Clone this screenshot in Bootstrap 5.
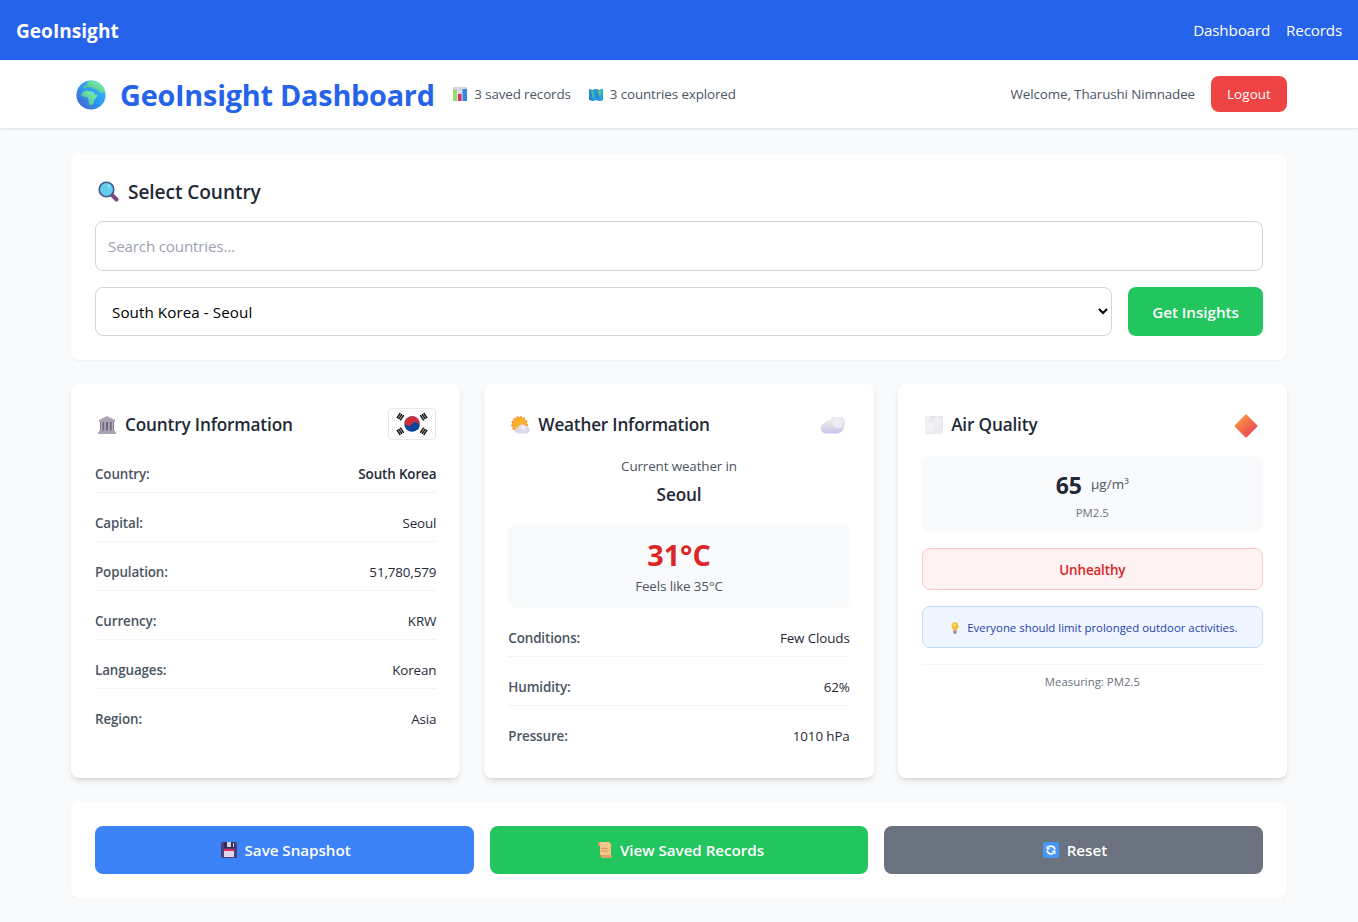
<!DOCTYPE html>
<html lang="en">
<head>
<meta charset="utf-8">
<meta name="viewport" content="width=device-width, initial-scale=1">
<title>GeoInsight Dashboard</title>
<link href="https://cdn.jsdelivr.net/npm/bootstrap@5.3.0/dist/css/bootstrap.min.css" rel="stylesheet">
<style>
body{font-family:"Open Sans","Noto Sans",sans-serif;background:#f9fafb;color:#1f2937;font-size:15.2px;line-height:24px;overflow:hidden}
.t12{font-size:11.4px;line-height:16px}
.t14{font-size:13.4px;line-height:20px;letter-spacing:-.12px}
.t18{font-size:17.2px;line-height:28px;letter-spacing:-.16px}
.t20{font-size:19.1px;line-height:28px;letter-spacing:-.08px}
.t24{font-size:23px;line-height:32px}
.t30{font-size:28.8px;line-height:36px}
/* optical centring of the larger and smaller text sizes */
.dn{padding-top:1px;margin-bottom:-1px;display:inline-block}
.navlinks{letter-spacing:-.16px}
.gray6{color:#4b5563}.gray5{color:#6b7280}
.topbar{background:#2563eb;height:60px}
.topbar .t20{padding-top:2px;letter-spacing:0}
.pagehead{border-bottom:1px solid #e5e7eb;box-shadow:0 1px 2px rgba(0,0,0,.05);height:69px}
.wrap{width:1216px}
.brandblue{color:#2563eb;letter-spacing:-.22px;padding-top:2px}
.panel{background:#fff;border:0;border-radius:8px;padding:24px}
.soft{box-shadow:0 1px 2px rgba(0,0,0,.05)}
.raised{box-shadow:0 4px 6px -1px rgba(0,0,0,.1),0 2px 4px -2px rgba(0,0,0,.1)}
.trio{display:grid;grid-template-columns:repeat(3,minmax(0,1fr))}
.field{border:1px solid #d1d5db;border-radius:8px;font-size:15.2px;padding:12px;color:#000}
input.field{height:50px;letter-spacing:-.18px}
input.field::placeholder{color:#9ca3af}
select.field{height:49px;appearance:auto;background:#fff;letter-spacing:.07px}
.act{border:0;border-radius:8px;color:#fff;font-weight:600;font-size:15.2px;height:48px;padding:0 0 0 3px;letter-spacing:-.04px}
.act:hover{color:#fff}
.go{background:#22c55e}.save{background:#3b82f6}.reset{background:#6b7280}
.insights{width:135px;height:49px;padding:2px 0 0}
.logout{background:#ef4444;border:0;border-radius:8px;width:76px;height:36px;padding:0;color:#fff;letter-spacing:.1px}
.paneltop{height:32px;margin-bottom:16px}
.line{padding:8px 0;border-bottom:1px solid #f3f4f6;margin-bottom:12px}
.line:last-child{border:0;margin:0}
.well{background:#f9fafb;border-radius:8px;padding:12px}
.hot{color:#dc2626}
.bad{background:#fef2f2;border:1px solid #fecaca;border-radius:8px;height:42px;color:#dc2626;padding-top:2px}
.tip{background:#eff6ff;border:1px solid #bfdbfe;border-radius:8px;height:42px;color:#1e40af;padding:2px 0 0 4px}
.rule{border-top:1px solid #f3f4f6;padding-top:9px}
.flag{border:1px solid #e5e7eb;border-radius:4px}
svg{display:block;flex:none}
</style>
</head>
<body>
<nav class="topbar d-flex justify-content-between align-items-center px-3 text-white">
  <span class="t20 fw-bold">GeoInsight</span>
  <div class="d-flex gap-3 navlinks"><span>Dashboard</span><span>Records</span></div>
</nav>
<header class="pagehead bg-white d-flex align-items-center">
  <div class="wrap mx-auto d-flex justify-content-between align-items-center">
    <div class="d-flex align-items-center">
      <svg width="30" height="30" viewBox="0 0 30 30" style="margin:2px 14px 0 5px"><defs><linearGradient id="sea" x1="1" y1="0" x2="0" y2="1"><stop offset="0" stop-color="#35c0ff"/><stop offset=".5" stop-color="#2d9bf0"/><stop offset="1" stop-color="#4a58c8"/></linearGradient><linearGradient id="land" x1="1" y1="0" x2="0" y2="1"><stop offset="0" stop-color="#7dffb0"/><stop offset="1" stop-color="#4aa891"/></linearGradient><clipPath id="ball"><circle cx="15" cy="15" r="14.6"/></clipPath></defs><circle cx="15" cy="15" r="14.6" fill="url(#sea)"/><g clip-path="url(#ball)" fill="url(#land)"><path d="M11 3l3-3h6l10 5v7l-1 2-2-2-2 2-1-2-2-1-2-2-2 0-2-1-1-1-2 .5-2-.5-2 1.500-2-.5 1-2.500 2.500 0z"/><path d="M7 12l3-1.500 3 .5 4 .7 2 3 2.500.3-1.500 3-2 2v2.500l-2 2.500-2 .5-1.200-2-.3-4-1.500-2.500H8l-2.500-1.500 0-2z"/></g></svg>
      <span class="t30 fw-bold brandblue">GeoInsight Dashboard</span>
      <div class="d-flex align-items-center t14 gray6" style="margin-left:18.500px">
        <svg width="14" height="14" viewBox="0 0 14 14"><path fill="#d5d0dc" d="M0 0h14v14H0z"/><path stroke="#e9e4ee" d="M0 4.500h14M0 9.500h14M4.500 0v14M9.500 0v14"/><path fill="#94dd68" d="M0 3h4v11H0z"/><path fill="#d92d6b" d="M5 7h3.500v7H5z"/><path fill="#3188dc" d="M9.500 2H14v12H9.500z"/></svg>
        <span style="margin:0 18px 0 7px">3 saved records</span>
        <svg width="14" height="13" viewBox="0 0 14 13"><path fill="#2787cf" d="M0 1l3.500 1L7 1l3.500 1L14 1v11l-3.500 1L7 12l-3.500 1L0 12z"/><path fill="#249fdf" d="M3.500 2L7 1v11l-3.500 1zM10.500 2L14 1v11l-3.500 1z"/><path fill="#50c890" d="M2 3l3 0-1 2 1 3-1 2-1-3zM8 4l2-2 3 1-1 3-1 4-1-3z"/></svg>
        <span style="margin-left:7px">3 countries explored</span>
      </div>
    </div>
    <div class="d-flex align-items-center gap-3 t14"><span class="gray6">Welcome, Tharushi Nimnadee</span><button class="btn logout t14">Logout</button></div>
  </div>
</header>
<main class="wrap mx-auto d-flex flex-column gap-4 pt-4">
  <section class="panel soft">
    <h2 class="t20 fw-semibold d-flex align-items-center mb-3"><svg width="21" height="21" viewBox="0 0 21 21" style="margin:1px 9px 0 3px"><path d="M14 14l4.500 4.500" stroke="#7f4785" stroke-width="4" stroke-linecap="round"/><circle cx="8.500" cy="8.500" r="7.300" fill="#62cdec" stroke="#49558f" stroke-width="1.600"/><circle cx="11" cy="4.800" r="1.300" fill="#9be5f7"/></svg><span class="dn">Select Country</span></h2>
    <input class="form-control field mb-3" placeholder="Search countries...">
    <div class="d-flex gap-3"><select class="form-select field"><option>South Korea - Seoul</option></select><button class="btn act go insights flex-shrink-0">Get Insights</button></div>
  </section>
  <div class="trio gap-4">
    <section class="panel raised">
      <div class="paneltop d-flex align-items-center justify-content-between">
        <h3 class="t18 fw-semibold d-flex align-items-center m-0"><svg width="18" height="18" viewBox="0 0 18 18" style="margin:1px 9px 0 3px"><path fill="#aaa3b2" d="M9 0l8 4v2H1V4z"/><path fill="#71687d" d="M2 6h14v9H2z"/><path stroke="#b6afc0" stroke-width="1.600" d="M3.500 6v9M7 6v9M11 6v9M14.500 6v9"/><path fill="#aaa3b8" d="M1 14.500h16V16h1v2H0v-2h1z"/></svg><span class="dn">Country Information</span></h3>
        <svg class="flag" width="48" height="32" viewBox="0 0 46 30"><g transform="translate(23 15)"><circle r="7.700" fill="#0047a0"/><path fill="#cd2e3a" d="M-6.400-4.300A7.700 7.700 0 0 1 6.400 4.300 3.850 3.850 0 0 1 0 0 3.850 3.850 0 0 1-6.400-4.300z"/><path fill="#cd2e3a" d="M-6.400-4.300A3.850 3.850 0 1 0 0 0z"/><circle cx="3.200" cy="2.150" r="3.850" fill="#0047a0"/><g stroke="#111" stroke-width="1.500"><g id="tri"><path d="M-13.400-4.800l3.400-5.100M-11.700-3.700l3.400-5.100M-15.100-5.900l3.400-5.100"/></g><use href="#tri" transform="scale(-1 1)"/><use href="#tri" transform="scale(1 -1)"/><use href="#tri" transform="scale(-1 -1)"/></g></g></svg>
      </div>
      <div class="t14">
        <div class="line d-flex justify-content-between"><span class="gray6 fw-semibold">Country:</span><span class="fw-semibold">South Korea</span></div>
        <div class="line d-flex justify-content-between"><span class="gray6 fw-semibold">Capital:</span><span>Seoul</span></div>
        <div class="line d-flex justify-content-between"><span class="gray6 fw-semibold">Population:</span><span>51,780,579</span></div>
        <div class="line d-flex justify-content-between"><span class="gray6 fw-semibold">Currency:</span><span>KRW</span></div>
        <div class="line d-flex justify-content-between"><span class="gray6 fw-semibold">Languages:</span><span>Korean</span></div>
        <div class="line d-flex justify-content-between"><span class="gray6 fw-semibold">Region:</span><span>Asia</span></div>
      </div>
    </section>
    <section class="panel raised">
      <div class="paneltop d-flex align-items-center justify-content-between">
        <h3 class="t18 fw-semibold d-flex align-items-center m-0"><svg width="19" height="18" viewBox="0 0 19 18" style="margin:2px 8px 0 3px"><circle cx="8.500" cy="8.500" r="7.400" fill="#fbb02c" stroke="#f28a2e" stroke-width="1.800" stroke-dasharray="2 1.500"/><circle cx="8.500" cy="8.500" r="7" fill="#fbb02c"/><path fill="#dcd8ea" d="M7.500 17.500a3.300 3.300 0 0 1-.5-6.500 4 4 0 0 1 7-1 3.900 3.900 0 0 1 2 7.500z"/><circle cx="12.500" cy="11.500" r="2.500" fill="#eeecf4"/></svg><span class="dn" style="letter-spacing:-.2px">Weather Information</span></h3>
        <svg width="25" height="17" viewBox="0 0 25 17" style="margin:3px 5px 0 0"><defs><linearGradient id="cl" x2="0" y2="1"><stop offset="0" stop-color="#efeef2"/><stop offset=".6" stop-color="#dfdce9"/><stop offset="1" stop-color="#cbc0ee"/></linearGradient></defs><path fill="url(#cl)" d="M6 16.500A5.500 5.500 0 0 1 5 5.700 6 6 0 0 1 10.500 3 7.500 7.500 0 0 1 24.500 8.500a8 8 0 0 1-7 8z"/><circle cx="17.500" cy="6.500" r="5" fill="#f0eff5" opacity=".8"/></svg>
      </div>
      <div class="t14 gray6 text-center">Current weather in</div>
      <div class="t18 fw-semibold text-center mt-1 mb-3" style="height:28px"><span class="dn">Seoul</span></div>
      <div class="well text-center" style="margin-bottom:12px"><div class="t30 fw-bold hot mb-1" style="height:36px"><span class="dn">31°C</span></div><div class="t14 gray6">Feels like 35°C</div></div>
      <div class="t14">
        <div class="line d-flex justify-content-between"><span class="gray6 fw-semibold">Conditions:</span><span>Few Clouds</span></div>
        <div class="line d-flex justify-content-between"><span class="gray6 fw-semibold">Humidity:</span><span>62%</span></div>
        <div class="line d-flex justify-content-between"><span class="gray6 fw-semibold">Pressure:</span><span>1010 hPa</span></div>
      </div>
    </section>
    <section class="panel raised">
      <div class="paneltop d-flex align-items-center justify-content-between">
        <h3 class="t18 fw-semibold d-flex align-items-center m-0"><svg width="18" height="18" viewBox="0 0 18 18" style="margin:2px 8.500px 0 3px"><defs><linearGradient id="puff" x2="0" y2="1"><stop offset="0" stop-color="#e4e4e7"/><stop offset=".35" stop-color="#f4f3f6"/><stop offset="1" stop-color="#e3e0ea"/></linearGradient><clipPath id="tile"><rect width="18" height="18" rx="1.500"/></clipPath></defs><g clip-path="url(#tile)"><path d="M0 0h18v18H0z" fill="#e4e3e8"/><circle cx="3" cy="2" r="3" fill="#f1f0f3"/><circle cx="12" cy="6" r="5.500" fill="#efeef2"/><circle cx="3" cy="11" r="6" fill="#f3f2f6"/><circle cx="13" cy="16" r="6" fill="#eceaf2"/></g></svg><span class="dn">Air Quality</span></h3>
        <svg width="24" height="24" viewBox="0 0 24 24" style="margin:3px 5px 0 0"><defs><linearGradient id="dm" x2="1" y2="0"><stop offset="0" stop-color="#f98a45"/><stop offset="1" stop-color="#ee5052"/></linearGradient></defs><rect x="3.600" y="3.600" width="16.800" height="16.800" rx="1" fill="url(#dm)" transform="rotate(45 12 12)"/></svg>
      </div>
      <div class="well text-center mb-3"><div class="d-flex justify-content-center mb-1" style="gap:9px;height:32px"><span class="t24 fw-bold dn">65</span><span class="t14 gray6" style="line-height:32px;letter-spacing:.1px">µg/m³</span></div><div class="t12 gray5 d-flex justify-content-center" style="height:16px"><span class="dn">PM2.5</span></div></div>
      <div class="bad t14 fw-semibold d-flex align-items-center justify-content-center mb-3"><span>Unhealthy</span></div>
      <div class="tip t12 d-flex align-items-center justify-content-center mb-3"><svg width="8" height="12" viewBox="0 0 8 12" style="margin-right:8px"><path fill="#fbbd3c" d="M4 0a4 4 0 0 1 2.200 7L6 8.500H2L1.800 7A4 4 0 0 1 4 0z"/><circle cx="3.500" cy="3" r="1.500" fill="#ffdf78"/><path fill="#9c8bab" d="M2.300 8.500h3.400v2L4.500 12h-1l-1.200-1.500z"/></svg><span>Everyone should limit prolonged outdoor activities.</span></div>
      <div class="rule t12 gray5 text-center">Measuring: PM2.5</div>
    </section>
  </div>
  <section class="panel soft trio gap-3">
    <button class="btn act save d-flex align-items-center justify-content-center"><svg width="16" height="16" viewBox="0 0 16 16" style="margin-right:7.500px"><path fill="#4c407a" d="M0 1l1-1h14l1 1v15H1l-1-1z"/><path fill="#342d59" d="M3 0h11v6H3z"/><path fill="#d6cfe0" d="M6 0h4v5H6zM12 1h1v4h-1z"/><path fill="#e0d6ea" d="M3 8h10v7H3z"/><path fill="#d72c55" d="M3 7h10v2H3z"/></svg><span>Save Snapshot</span></button>
    <button class="btn act go d-flex align-items-center justify-content-center"><svg width="16" height="18" viewBox="0 0 16 18" style="margin-right:7px"><path fill="#f5c486" d="M1 1h11l2 2v11H3V5H1z"/><path fill="#db9862" d="M1 1h2v4H1zM4 7h7v1H4zM4 9.500h7v1H4z"/><path fill="#e3a46c" d="M4 14h11v2l-1 1H5l-1-1z"/></svg><span>View Saved Records</span></button>
    <button class="btn act reset d-flex align-items-center justify-content-center"><svg width="16" height="16" viewBox="0 0 16 16" style="margin-right:7.500px"><rect width="16" height="16" rx="1.500" fill="#4698f5"/><path fill="none" stroke="#fff" stroke-width="1.800" d="M12 7.500a4 4 0 0 0-6.500-2.500M4 8.500a4 4 0 0 0 6.500 2.500"/><path fill="#fff" d="M3.500 3.500v4h4zM12.500 12.500v-4h-4z"/></svg><span>Reset</span></button>
  </section>
</main>
<script src="https://cdn.jsdelivr.net/npm/bootstrap@5.3.0/dist/js/bootstrap.bundle.min.js"></script>
</body>
</html>
